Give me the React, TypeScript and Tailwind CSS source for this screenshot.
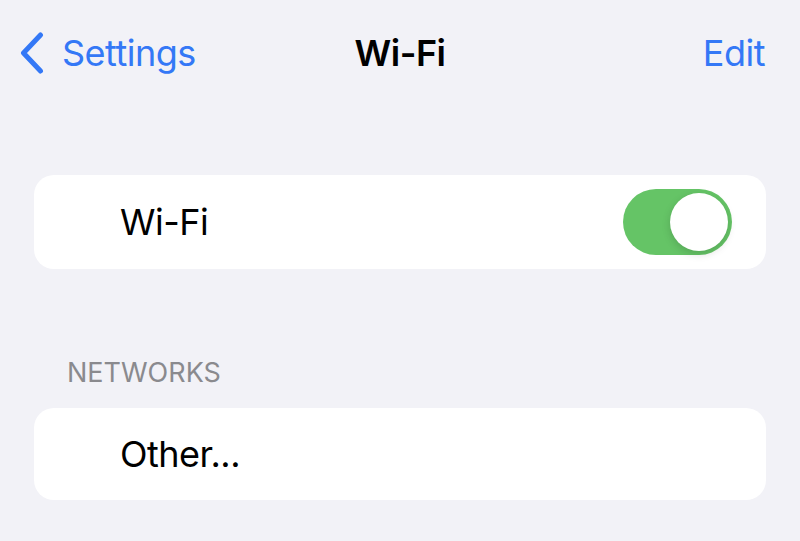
import React from 'react';

function Toggle({ on }: { on: boolean }) {
  return (
    <div
      className={`w-[109px] h-[66px] rounded-full p-[4px] flex ${on ? 'bg-[#65c466] justify-end' : 'bg-[#e9e9eb] justify-start'}`}
    >
      <div className="w-[58px] h-[58px] rounded-full bg-white shadow-[0_3px_8px_rgba(0,0,0,0.15)]" />
    </div>
  );
}

export default function App() {
  return (
    <div className="w-[800px] h-[541px] overflow-hidden bg-[#f2f2f7] font-['Inter','Liberation_Sans',sans-serif] text-black">
      {/* navigation bar */}
      <div className="h-[106px] grid grid-cols-[1fr_auto_1fr] items-center px-[20px]">
        <div className="flex items-center gap-[18px] text-[#3478f6]">
          <svg width="24" height="42" viewBox="0 0 24 42" fill="none">
            <path d="M20.5 3 L3.5 21 L20.5 39" stroke="currentColor" strokeWidth="5" strokeLinecap="round" strokeLinejoin="round" />
          </svg>
          <span className="text-[36px] tracking-[-0.5px] leading-none">Settings</span>
        </div>
        <div className="text-[36px] font-semibold tracking-[-0.5px] leading-none">Wi-Fi</div>
        <div className="flex justify-end pr-[15px]">
          <span className="text-[36px] tracking-[-0.5px] leading-none text-[#3478f6]">Edit</span>
        </div>
      </div>

      <div className="px-[34px] pt-[69px]">
        <div className="h-[94px] rounded-[20px] bg-white flex items-center justify-between pl-[86px] pr-[34px]">
          <span className="text-[36px] tracking-[-0.5px] leading-none">Wi-Fi</span>
          <Toggle on />
        </div>

        <div className="pl-[33px] pt-[90px] pb-[22px] text-[27px] leading-none text-[#8a8a8e] uppercase">
          Networks
        </div>

        <div className="h-[92px] rounded-[20px] bg-white flex items-center pl-[86px]">
          <span className="text-[36px] tracking-[-0.5px] leading-none">Other...</span>
        </div>
      </div>
    </div>
  );
}
